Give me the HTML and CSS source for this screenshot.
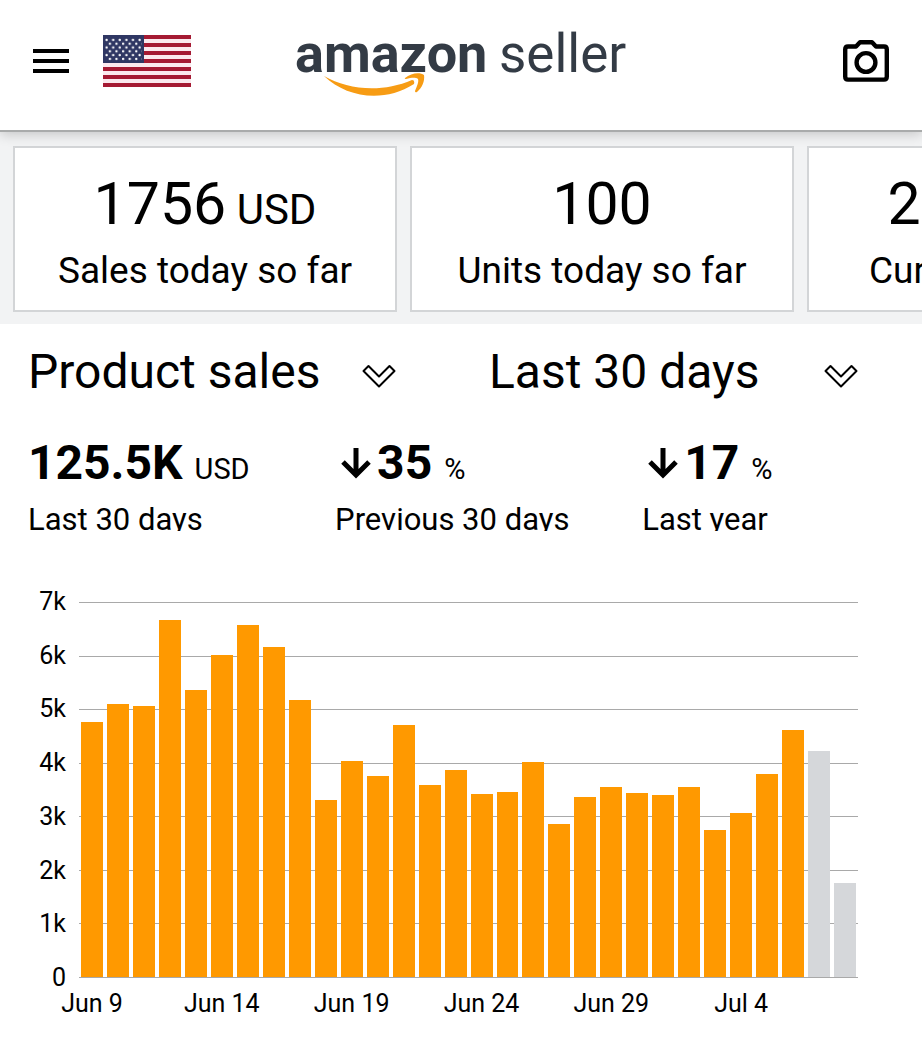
FILE: index.html
```html
<!DOCTYPE html>
<html lang="en">
<head>
  <meta charset="UTF-8">
  <meta name="viewport" content="width=device-width, initial-scale=1.0">
  <title>Amazon Seller</title>
  <link rel="stylesheet" href="styles.css">
</head>
<body>
  <header class="topbar">
    <div class="topbar-left">
      <button class="icon-btn" type="button" aria-label="Menu">
        <svg width="36" height="26" viewBox="0 0 36 26"><path d="M0 3h36M0 13h36M0 23h36" stroke="#000" stroke-width="4"/></svg>
      </button>
      <button class="icon-btn" type="button" aria-label="Marketplace: United States">
        <svg width="88" height="52" viewBox="0 0 88 52">
          <defs>
            <pattern id="stars" x="2" y="3" width="6.6" height="7.6" patternUnits="userSpaceOnUse">
              <circle cx="1.6" cy="1.9" r="1.2" fill="#fff"/>
              <circle cx="4.9" cy="5.7" r="1.2" fill="#fff"/>
            </pattern>
          </defs>
          <rect width="88" height="52" fill="#fbe9ee"/>
          <path d="M0 2h88M0 10h88M0 18h88M0 26h88M0 34h88M0 42h88M0 50h88" stroke="#a51a33" stroke-width="4"/>
          <rect width="41" height="28" fill="#2f3763"/>
          <rect x="2" y="3" width="37" height="22.8" fill="url(#stars)"/>
        </svg>
      </button>
    </div>
    <a class="logo" href="#" aria-label="amazon seller">
      <svg width="330" height="76" viewBox="0 0 330 76">
        <text class="logo-bold" x="-1" y="49">amazon</text>
        <text class="logo-thin" x="203" y="49">seller</text>
        <path d="M28 53C52 67 86 70 116 57Q119 57 118 61C88 80 51 75 28 53Z" fill="#f79c14"/>
        <path d="M109 55C115 50 124 49 128 52C129 58 126 65 121 69Q119 70 119 68C121 63 123 59 122 56C119 54 115 55 110 56Q108 56 109 55Z" fill="#f79c14"/>
      </svg>
    </a>
    <button class="icon-btn camera" type="button" aria-label="Camera">
      <svg width="46" height="42" viewBox="0 0 46 42" fill="none" stroke="#000" stroke-width="4.4">
        <path d="M5 6.5H13L17 2.2H29L33 6.5H41Q43.8 6.5 43.8 9.5V36.5Q43.8 39.6 41 39.6H5Q2.2 39.6 2.2 36.5V9.5Q2.2 6.5 5 6.5Z" stroke-linejoin="round"/>
        <circle cx="23" cy="22.5" r="9.4"/>
      </svg>
    </button>
  </header>

  <section class="cards">
    <div class="card">
      <p class="card-value">1756<small> USD</small></p>
      <p class="card-label">Sales today so far</p>
    </div>
    <div class="card">
      <p class="card-value">100</p>
      <p class="card-label">Units today so far</p>
    </div>
    <div class="card">
      <p class="card-value">2105<small> USD</small></p>
      <p class="card-label">Current balance</p>
    </div>
  </section>

  <main class="content">
    <form class="filters">
      <div class="filter filter-metric">
        <select aria-label="Metric">
          <option>Product sales</option>
        </select>
        <svg class="chevron" width="34" height="24" viewBox="0 0 34 24"><path d="M1.5 7L6.5 2L17 12.5L27.500 2L32.500 7L17 22.500Z"/></svg>
      </div>
      <div class="filter filter-range">
        <select aria-label="Date range">
          <option>Last 30 days</option>
        </select>
        <svg class="chevron" width="34" height="24" viewBox="0 0 34 24"><path d="M1.5 7L6.5 2L17 12.5L27.500 2L32.500 7L17 22.500Z"/></svg>
      </div>
    </form>

    <div class="stats">
      <div class="stat">
        <p class="stat-value">125.5K <small>USD</small></p>
        <p class="stat-label">Last 30 days</p>
      </div>
      <div class="stat">
        <p class="stat-value"><svg class="arrow" width="30" height="31" viewBox="0 0 30 31"><path d="M15 0V27M2 14L15 27L28 14"/></svg>35 <small>%</small></p>
        <p class="stat-label">Previous 30 days</p>
      </div>
      <div class="stat">
        <p class="stat-value"><svg class="arrow" width="30" height="31" viewBox="0 0 30 31"><path d="M15 0V27M2 14L15 27L28 14"/></svg>17 <small>%</small></p>
        <p class="stat-label">Last year</p>
      </div>
    </div>

    <div class="chart">
      <div class="y-axis">
        <span>7k</span><span>6k</span><span>5k</span><span>4k</span><span>3k</span><span>2k</span><span>1k</span><span>0</span>
      </div>
      <div class="plot">
        <div class="grid-lines"><i></i><i></i><i></i><i></i><i></i><i></i><i></i><i></i></div>
        <div class="bars" id="bars"></div>
      </div>
      <div class="x-axis" id="x-axis"></div>
    </div>
  </main>
  <script src="script.js"></script>
</body>
</html>
```
FILE: styles.css
```css
* {
  margin: 0;
  padding: 0;
  box-sizing: border-box;
}
body {
  font-family: Roboto, Arial, sans-serif;
  background-color: #fff;
  color: #000;
}
button, select {
  font: inherit;
  color: inherit;
  background: none;
  border: none;
}
svg {
  display: block;
}

/* header */
.topbar {
  display: grid;
  grid-template-columns: 1fr auto 1fr;
  align-items: center;
  height: 132px;
  padding: 0 33px 8px;
  border-bottom: 2px solid #a9abab;
  box-shadow: 0 2px 12px rgba(0, 0, 0, 0.2);
  position: relative;
  background-color: #fff;
}
.topbar-left {
  display: flex;
  align-items: center;
  gap: 34px;
}
.camera {
  justify-self: end;
}
.logo-bold, .logo-thin {
  font-family: Roboto, sans-serif;
  fill: #333b45;
}
.logo-bold {
  font-size: 54px;
  font-weight: 700;
}
.logo-thin {
  font-size: 53px;
  font-weight: 400;
}

/* summary cards */
.cards {
  display: flex;
  gap: 13px;
  padding: 14px 13px 12px;
  background-color: #f2f3f4;
  overflow: hidden;
}
.card {
  flex: 0 0 384px;
  height: 166px;
  padding-top: 24px;
  border: 2px solid #d3d5d7;
  background-color: #fff;
  text-align: center;
}
.card-value {
  font-size: 59px;
  line-height: 64px;
}
.card-value small {
  font-size: 42px;
  line-height: 1;
}
.card-label {
  font-size: 37px;
  line-height: 40px;
  margin-top: 15px;
}

/* filters */
.content {
  padding: 16px 64px 24px 28px;
}
.filters {
  display: flex;
  justify-content: space-between;
}
.filter {
  position: relative;
}
.filter-metric {
  width: 368px;
}
.filter-range {
  width: 369px;
}
.filter select {
  appearance: none;
  width: 100%;
  font-size: 48px;
  line-height: 64px;
}
.chevron {
  position: absolute;
  right: 0;
  top: 24px;
  fill: none;
  stroke: #000;
  stroke-width: 2;
  stroke-linejoin: round;
  pointer-events: none;
}

/* totals */
.stats {
  display: grid;
  grid-template-columns: 37% 37% 26%;
  margin-top: 31px;
}
.stat-value {
  display: flex;
  align-items: baseline;
  font-size: 48px;
  line-height: 56px;
  font-weight: 700;
}
.stat-value small {
  font-size: 29px;
  font-weight: 400;
  margin-left: 12px;
}
.arrow {
  margin: 0 6px;
  fill: none;
  stroke: #000;
  stroke-width: 5;
}
.stat-label {
  height: 26px;
  margin-top: 8px;
  font-size: 31px;
  line-height: 30px;
  overflow: hidden;
}

/* chart */
.chart {
  display: grid;
  grid-template-columns: 38px 1fr;
  column-gap: 13px;
  margin-top: 58px;
}
.y-axis {
  display: flex;
  flex-direction: column;
  justify-content: space-between;
  text-align: right;
  font-size: 25px;
  line-height: 26px;
}
.plot {
  position: relative;
  height: 376px;
  margin: 13px 0;
}
.grid-lines {
  position: absolute;
  inset: 0;
  display: flex;
  flex-direction: column;
  justify-content: space-between;
}
.grid-lines i {
  height: 1px;
  background-color: #a9a9a9;
}
.bars {
  position: relative;
  display: flex;
  align-items: flex-end;
  gap: 4px;
  height: 375px;
  padding: 0 2px;
}
.bar {
  flex: 1;
  background-color: #ff9900;
}
.bar-pending {
  background-color: #d5d7da;
}
.x-axis {
  grid-column: 2;
  display: grid;
  grid-template-columns: repeat(30, minmax(0, 1fr));
  font-size: 25px;
  line-height: 26px;
}
.x-axis span {
  justify-self: center;
  white-space: nowrap;
}
```
FILE: script.js
```js
// daily sales in USD, Jun 9 - Jul 8
var sales = [
  4760, 5100, 5060, 6665, 5360, 6010, 6570, 6160, 5170, 3305,
  4030, 3750, 4705, 3590, 3865, 3415, 3455, 4015, 2855, 3360,
  3550, 3440, 3400, 3550, 2740, 3065, 3785, 4610, 4220, 1756
];
var labels = ['Jun 9', 'Jun 14', 'Jun 19', 'Jun 24', 'Jun 29', 'Jul 4'];
var max = 7000;

var bars = document.getElementById('bars');
sales.forEach(function (value, i) {
  var bar = document.createElement('div');
  // the last two days are not final yet
  bar.className = i >= 28 ? 'bar bar-pending' : 'bar';
  bar.style.height = (value / max * 100) + '%';
  bars.appendChild(bar);
});

// one label every five days
var axis = document.getElementById('x-axis');
labels.forEach(function (text, i) {
  var label = document.createElement('span');
  label.textContent = text;
  label.style.gridColumn = i * 5 + 1;
  axis.appendChild(label);
});
```
